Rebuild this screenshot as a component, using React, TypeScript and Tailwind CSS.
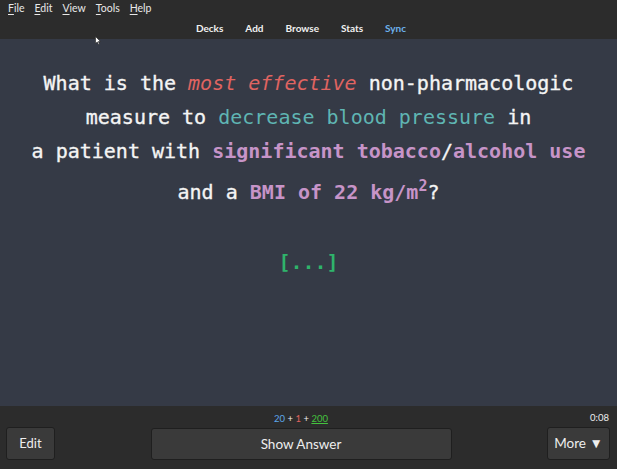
import React from 'react';

const uiFont = { fontFamily: 'Lato, "Open Sans", "Liberation Sans", sans-serif' };

function MenuItem({ label }: { label: string }) {
  return (
    <span>
      <span className="underline underline-offset-[2px]">{label[0]}</span>
      {label.slice(1)}
    </span>
  );
}

export default function App() {
  return (
    <div className="relative w-full h-[469px] flex flex-col bg-[#2c2c2c] overflow-hidden" style={uiFont}>
      {/* Top bar: menu + deck nav */}
      <div className="h-[39px] flex flex-col">
        <div className="h-[18px] flex items-center gap-[10px] pl-[8px] text-[10.5px] text-[#e8e8e8]">
          {['File', 'Edit', 'View', 'Tools', 'Help'].map((m) => (
            <MenuItem key={m} label={m} />
          ))}
        </div>
        <div className="flex-1 flex items-center justify-center gap-[22px] text-[10px] font-bold text-[#f0f0f0] pr-[15px]">
          <span>Decks</span>
          <span>Add</span>
          <span>Browse</span>
          <span>Stats</span>
          <span className="text-[#6cb1ec]">Sync</span>
        </div>
      </div>

      {/* Card */}
      <div
        className="flex-1 bg-[#353a46] flex flex-col items-center pt-[27px] text-[20px] text-[#f4f4f4] [-webkit-text-stroke-width:0.35px]"
        style={{ fontFamily: '"DejaVu Sans Mono", "Liberation Mono", monospace' }}
      >
        <div className="text-center leading-[34px]">
          What is the <span className="italic text-[#e06461] [-webkit-text-stroke-width:0px]">most effective</span> non-pharmacologic
          <br />
          measure to <span className="text-[#5fb5b3] [-webkit-text-stroke-width:0px]">decrease blood pressure</span> in
          <br />
          a patient with <span className="font-bold text-[#c794c8] [-webkit-text-stroke-width:0px]">significant tobacco</span>/
          <span className="font-bold text-[#c794c8] [-webkit-text-stroke-width:0px]">alcohol use</span>
          <br />
          <span className="inline-block pt-[7px]">
            and a{' '}
            <span className="font-bold text-[#c794c8] [-webkit-text-stroke-width:0px]">
              BMI of 22 kg/m<sup className="text-[15px] top-[-0.55em]">2</sup>
            </span>
            ?
          </span>
        </div>
        <div className="mt-[36px] font-bold text-[#2fb36b] leading-[34px] [-webkit-text-stroke-width:0px]">[...]</div>
      </div>

      {/* Bottom bar */}
      <div className="h-[63px] flex items-end justify-between pl-[6px] pr-[7px] pb-[9px] text-[#eeeeee]">
        <button className="w-[49px] h-[33px] rounded-[3px] bg-[#3a3a3a] border border-[#1f1f1f] text-[13px]">
          Edit
        </button>
        <div className="flex flex-col items-center">
          <div className="text-[9.5px] leading-[12px] mb-[3px]">
            <span className="text-[#5ca6ea]">20</span> + <span className="text-[#e0625d]">1</span> +{' '}
            <span className="text-[#44c23e] underline">200</span>
          </div>
          <button className="w-[301px] h-[32px] rounded-[3px] bg-[#3a3a3a] border border-[#1f1f1f] text-[13.5px]">
            Show Answer
          </button>
        </div>
        <div className="flex flex-col items-end">
          <div className="text-[9.5px] leading-[12px] mb-[3px] pr-[1px]">0:08</div>
          <button className="w-[63px] h-[33px] rounded-[3px] bg-[#3a3a3a] border border-[#1f1f1f] text-[13.5px]">
            More ▼
          </button>
        </div>
      </div>

      {/* mouse pointer */}
      <svg className="absolute left-[95px] top-[36px]" width="6" height="9" viewBox="0 0 6 9">
        <path d="M0.5 0.5 L0.5 7.5 L2.2 6 L3.5 8.5 L4.5 8 L3.3 5.6 L5.5 5.5 Z" fill="#fff" stroke="#222" strokeWidth="0.6" />
      </svg>
    </div>
  );
}
